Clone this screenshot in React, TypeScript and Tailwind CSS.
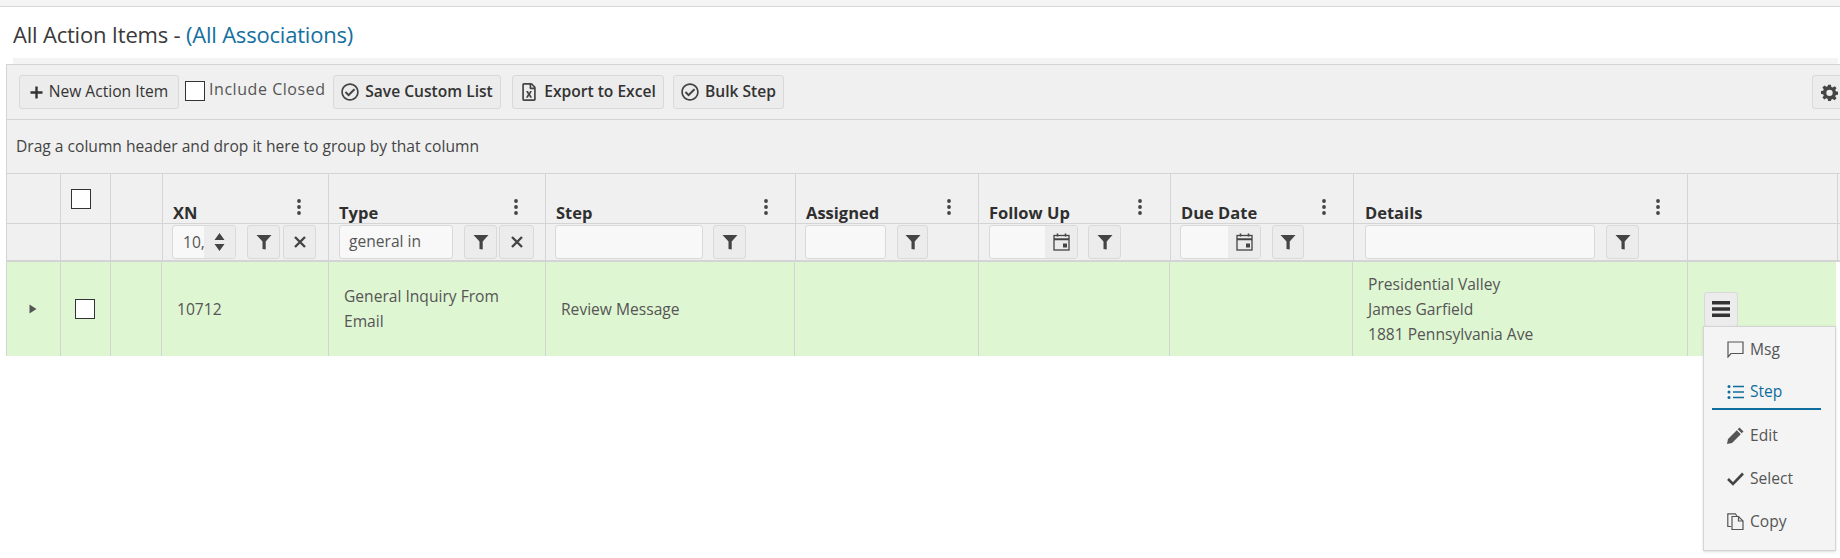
import type { ReactNode } from "react";
import { FaRegCheckCircle, FaRegFileExcel } from "react-icons/fa";

const headGrid =
  "grid grid-cols-[53px_50px_52px_166px_217px_250px_183px_192px_183px_334px_150px_1fr]";
const rowGrid =
  "grid grid-cols-[53px_50px_51px_167px_217px_249px_184px_191px_183px_335px_149px]";

function FilterIcon() {
  return (
    <svg width="16" height="16" viewBox="0 0 16 16" fill="#444">
      <path d="M0.500 1h15L9.700 7.500V15.500L6.500 15V7.500z" />
    </svg>
  );
}

function Kebab() {
  return (
    <svg width="6" height="16" viewBox="0 0 6 16" fill="#444">
      <circle cx="3" cy="2" r="1.900" />
      <circle cx="3" cy="8" r="1.900" />
      <circle cx="3" cy="14" r="1.900" />
    </svg>
  );
}

function CalendarIcon() {
  return (
    <svg width="17" height="18" viewBox="0 0 17 18" fill="none" stroke="#444">
      <rect x="1" y="2.500" width="15" height="14.500" strokeWidth="1.300" />
      <path d="M1 6.200h15" strokeWidth="2" />
      <path d="M4.500 0.500v3M12.500 0.500v3" strokeWidth="1.600" />
      <rect x="10" y="10.500" width="4" height="4" fill="#444" stroke="none" />
    </svg>
  );
}

function ClearIcon() {
  return (
    <svg width="12" height="12" viewBox="0 0 12 12" stroke="#444" strokeWidth="2.400">
      <path d="M1 1l10 10M11 1L1 11" />
    </svg>
  );
}

function IconBtn({ w, ml, children }: { w: string; ml?: string; children: ReactNode }) {
  return (
    <button
      className={`${w} ${ml ?? ""} h-[34px] shrink-0 flex items-center justify-center rounded-[3px] border border-[#d9d9d9] bg-[#ececec]`}
    >
      {children}
    </button>
  );
}

function ToolBtn({ w, icon, label, bold }: { w: string; icon: ReactNode; label: string; bold?: boolean }) {
  return (
    <button
      className={`${w} h-[34px] shrink-0 flex items-center justify-center gap-[6px] rounded-[3px] border border-[#d9d9d9] bg-[#ececec] text-[15.6px] text-[#333] whitespace-nowrap ${
        bold ? "font-semibold" : ""
      }`}
    >
      {icon}
      {label}
    </button>
  );
}

function HeadCell({ label, pl, kebab }: { label?: string; pl?: string; kebab?: string }) {
  return (
    <div className="h-[49px] border-l border-[#d4d4d4] relative flex items-end">
      {label && (
        <span className={`${pl} text-[16.5px] font-bold leading-[22px] mb-[-1px] text-[#2f2f2f]`}>
          {label}
        </span>
      )}
      {kebab && (
        <span className={`${kebab} absolute top-[25px] flex`}>
          <Kebab />
        </span>
      )}
    </div>
  );
}

function FilterCell({ children, pl }: { children?: ReactNode; pl?: string }) {
  return (
    <div className={`${pl ?? ""} h-[36px] border-l border-[#d4d4d4] flex items-center`}>
      {children}
    </div>
  );
}

function TextInput({ w, value }: { w: string; value?: string }) {
  return (
    <div
      className={`${w} h-[34px] shrink-0 rounded-[3px] border border-[#d9d9d9] bg-[#f8f8f8] px-[9px] flex items-center text-[15.6px] text-[#555]`}
    >
      {value}
    </div>
  );
}

function DateInput({ w }: { w: string }) {
  return (
    <div className={`${w} h-[34px] shrink-0 rounded-[3px] border border-[#d9d9d9] bg-[#f8f8f8] flex justify-end overflow-hidden`}>
      <div className="w-[32px] bg-[#ececec] flex items-center justify-center">
        <CalendarIcon />
      </div>
    </div>
  );
}

function RowCell({ children, pl }: { children?: ReactNode; pl?: string }) {
  return (
    <div className={`${pl ?? ""} h-[94px] border-l border-[#d4d4d4] flex items-center text-[15.6px] leading-[25px] text-[#555]`}>
      {children}
    </div>
  );
}

function MenuItem({ icon, label, active }: { icon: ReactNode; label: string; active?: boolean }) {
  return (
    <div
      className={`ml-[8px] mr-[14px] pl-[15px] flex items-center gap-[6px] text-[15.6px] ${
        active ? "h-[39px] pt-[4px] text-[#0f6d9e] border-b-2 border-[#0f6d9e]" : "h-[43px] text-[#555]"
      }`}
    >
      <span className="w-[17px] flex justify-center">{icon}</span>
      {label}
    </div>
  );
}

export default function App() {
  return (
    <div className="w-[1840px] h-[558px] overflow-hidden bg-white font-['Open_Sans','Noto_Sans',sans-serif]">
      <div className="h-[7px] bg-[#f4f4f4] border-b border-[#d8d8d8]" />
      <h1 className="h-[51px] pl-[13px] pt-[13px] text-[22px] leading-[28px] tracking-[-0.2px] text-[#3a3a3a]">
        All Action Items - <span className="text-[#14709f]">(All Associations)</span>
      </h1>
      <div className="ml-[13px] mr-[2px] h-[6px] bg-[#f4f4f4]" />

      <div className="ml-[6px] border-l border-[#d4d4d4] relative">
        {/* Toolbar */}
        <div className="h-[56px] border-t border-b border-[#d4d4d4] bg-[#f0f0f0] pl-[12px] pt-[10px] flex items-start">
          <ToolBtn
            w="w-[160px]"
            label="New Action Item"
            icon={
              <svg width="13" height="13" viewBox="0 0 13 13" stroke="#333" strokeWidth="2.400">
                <path d="M6.500 0.500v12M0.500 6.500h12" />
              </svg>
            }
          />
          <span className="ml-[6px] mt-[6px] w-[20px] h-[20px] bg-white border border-[#333]" />
          <span className="ml-[4px] mt-[2px] w-[124px] text-[16px] leading-[24px] tracking-[0.55px] text-[#555] whitespace-nowrap">
            Include Closed
          </span>
          <ToolBtn w="w-[168px]" bold label="Save Custom List" icon={<FaRegCheckCircle size={18} color="#444" />} />
          <span className="w-[11px]" />
          <ToolBtn w="w-[152px]" bold label="Export to Excel" icon={<FaRegFileExcel size={18} color="#444" />} />
          <span className="w-[9px]" />
          <ToolBtn w="w-[111px]" bold label="Bulk Step" icon={<FaRegCheckCircle size={18} color="#444" />} />
          <span className="flex-1" />
          <button className="w-[40px] mr-[-12px] h-[34px] shrink-0 flex items-center pl-[8px] rounded-[3px] border border-[#d9d9d9] bg-[#ececec]">
            <svg width="17" height="17" viewBox="0 0 24 24" fill="#444" fillRule="evenodd">
              <path d="M10 1h4l.6 3.100 1.900.8L19.200 3l2.800 2.800-1.900 2.700.8 1.900 3.100.6v4l-3.100.6-.8 1.900 1.900 2.700-2.800 2.800-2.700-1.900-1.900.8L14 24h-4l-.6-3.100-1.900-.8L4.800 22 2 19.200l1.900-2.700-.8-1.900L0 14v-4l3.100-.6.8-1.900L2 4.800 4.800 2l2.700 1.900 1.900-.8zM12 8a4.500 4.500 0 1 0 0 9 4.500 4.500 0 0 0 0-9z" />
            </svg>
          </button>
        </div>

        {/* Group bar */}
        <div className="h-[54px] border-b border-[#d4d4d4] bg-[#f0f0f0] pl-[9px] flex items-center text-[15.6px] text-[#444]">
          Drag a column header and drop it here to group by that column
        </div>

        {/* Header */}
        <div className={`${headGrid} bg-[#f0f0f0] border-b border-[#d4d4d4]`}>
          <div className="h-[49px]" />
          <div className="h-[49px] border-l border-[#d4d4d4] pl-[10px] pt-[15px]">
            <div className="w-[20px] h-[20px] bg-white border border-[#333]" />
          </div>
          <HeadCell />
          <HeadCell label="XN" pl="pl-[10px]" kebab="left-[133px]" />
          <HeadCell label="Type" pl="pl-[10px]" kebab="left-[184px]" />
          <HeadCell label="Step" pl="pl-[10px]" kebab="left-[217px]" />
          <HeadCell label="Assigned" pl="pl-[10px]" kebab="left-[150px]" />
          <HeadCell label="Follow Up" pl="pl-[10px]" kebab="left-[158px]" />
          <HeadCell label="Due Date" pl="pl-[10px]" kebab="left-[150px]" />
          <HeadCell label="Details" pl="pl-[11px]" kebab="left-[301px]" />
          <HeadCell />
          <HeadCell />
        </div>

        {/* Filter row */}
        <div className={`${headGrid} bg-[#f0f0f0] border-b-2 border-[#d4d4d4]`}>
          <div className="h-[36px]" />
          <FilterCell />
          <FilterCell />
          <FilterCell pl="pl-[9px]">
            <div className="w-[64px] h-[34px] shrink-0 rounded-[3px] border border-[#d9d9d9] bg-[#f8f8f8] flex overflow-hidden text-[15.6px] text-[#555]">
              <span className="w-[31px] pl-[10px] leading-[32px] overflow-hidden">10,</span>
              <span className="flex-1 bg-[#ececec] flex items-center justify-center">
                <svg width="11" height="20" viewBox="0 0 11 20" fill="#444">
                  <path d="M5.500 1l5 7H.5zM5.500 19l5-7H.5z" />
                </svg>
              </span>
            </div>
            <IconBtn w="w-[33px]" ml="ml-[11px]"><FilterIcon /></IconBtn>
            <IconBtn w="w-[33px]" ml="ml-[3px]"><ClearIcon /></IconBtn>
          </FilterCell>
          <FilterCell pl="pl-[10px]">
            <TextInput w="w-[114px]" value="general in" />
            <IconBtn w="w-[33px]" ml="ml-[11px]"><FilterIcon /></IconBtn>
            <IconBtn w="w-[35px]" ml="ml-[2px]"><ClearIcon /></IconBtn>
          </FilterCell>
          <FilterCell pl="pl-[9px]">
            <TextInput w="w-[148px]" />
            <IconBtn w="w-[33px]" ml="ml-[10px]"><FilterIcon /></IconBtn>
          </FilterCell>
          <FilterCell pl="pl-[9px]">
            <TextInput w="w-[81px]" />
            <IconBtn w="w-[31px]" ml="ml-[11px]"><FilterIcon /></IconBtn>
          </FilterCell>
          <FilterCell pl="pl-[10px]">
            <DateInput w="w-[89px]" />
            <IconBtn w="w-[33px]" ml="ml-[10px]"><FilterIcon /></IconBtn>
          </FilterCell>
          <FilterCell pl="pl-[9px]">
            <DateInput w="w-[81px]" />
            <IconBtn w="w-[32px]" ml="ml-[11px]"><FilterIcon /></IconBtn>
          </FilterCell>
          <FilterCell pl="pl-[11px]">
            <TextInput w="w-[230px]" />
            <IconBtn w="w-[33px]" ml="ml-[11px]"><FilterIcon /></IconBtn>
          </FilterCell>
          <FilterCell />
          <FilterCell />
        </div>

        {/* Data row */}
        <div className={`${rowGrid} mr-[4px] bg-[#dff6d3]`}>
          <div className="h-[94px] pl-[22px] flex items-center">
            <svg width="8" height="10" viewBox="0 0 8 10" fill="#555">
              <path d="M0.500 0.500L7.500 5L0.500 9.500z" />
            </svg>
          </div>
          <RowCell pl="pl-[14px]">
            <span className="w-[20px] h-[20px] bg-white border border-[#333]" />
          </RowCell>
          <RowCell />
          <RowCell pl="pl-[15px]">10712</RowCell>
          <RowCell pl="pl-[15px]">
            <span>General Inquiry From<br />Email</span>
          </RowCell>
          <RowCell pl="pl-[15px]">Review Message</RowCell>
          <RowCell />
          <RowCell />
          <RowCell />
          <RowCell pl="pl-[15px]">
            <span>
              Presidential Valley<br />James Garfield<br />1881 Pennsylvania Ave
            </span>
          </RowCell>
          <RowCell pl="pl-[16px]">
            <button className="w-[34px] h-[35px] flex items-center justify-center rounded-[3px] border border-[#d9d9d9] bg-[#ececec]">
              <svg width="18" height="16" viewBox="0 0 18 16" fill="#333">
                <path d="M0 0h18v3.500H0zM0 6.200h18v3.500H0zM0 12.500h18V16H0z" />
              </svg>
            </button>
          </RowCell>
        </div>

        {/* Row action menu */}
        <div className="absolute left-[1696px] top-[262px] w-[133px] h-[225px] pt-[1px] border border-[#d4d4d4] bg-[#f4f4f4] shadow-sm">
          <MenuItem
            label="Msg"
            icon={
              <svg width="17" height="17" viewBox="0 0 17 17" fill="none" stroke="#555" strokeWidth="1.200">
                <path d="M1 1h15v11.500H4L1 16z" />
              </svg>
            }
          />
          <MenuItem
            active
            label="Step"
            icon={
              <svg width="17" height="16" viewBox="0 0 17 16" fill="none" stroke="#0f6d9e">
                <circle cx="2" cy="2.500" r="1.500" fill="#0f6d9e" stroke="none" />
                <circle cx="2" cy="8" r="1.500" fill="#0f6d9e" stroke="none" />
                <circle cx="2" cy="13.500" r="1.500" fill="#0f6d9e" stroke="none" />
                <path d="M6 2.500h11M6 8h11M6 13.500h11" strokeWidth="1.300" />
              </svg>
            }
          />
          <div className="h-[4px]" />
          <MenuItem
            label="Edit"
            icon={
              <svg width="17" height="17" viewBox="0 0 17 17" fill="#555">
                <path d="M12.500 0.500l4 4-1.800 1.800-4-4zM9.800 3.200l4 4L5 16l-5 1 1-5z" />
              </svg>
            }
          />
          <MenuItem
            label="Select"
            icon={
              <svg width="17" height="14" viewBox="0 0 17 14" fill="none" stroke="#444" strokeWidth="2.600">
                <path d="M1 7l5 5L16 1.500" />
              </svg>
            }
          />
          <MenuItem
            label="Copy"
            icon={
              <svg width="17" height="17" viewBox="0 0 17 17" fill="none" stroke="#555" strokeWidth="1.200">
                <path d="M4 13.500H.8V.8h7.500L10 3" />
                <path d="M5 3.500h6.500L16 8v8.500H5z" fill="#f4f4f4" />
                <path d="M11.500 3.500V8H16" />
              </svg>
            }
          />
        </div>
      </div>
    </div>
  );
}
